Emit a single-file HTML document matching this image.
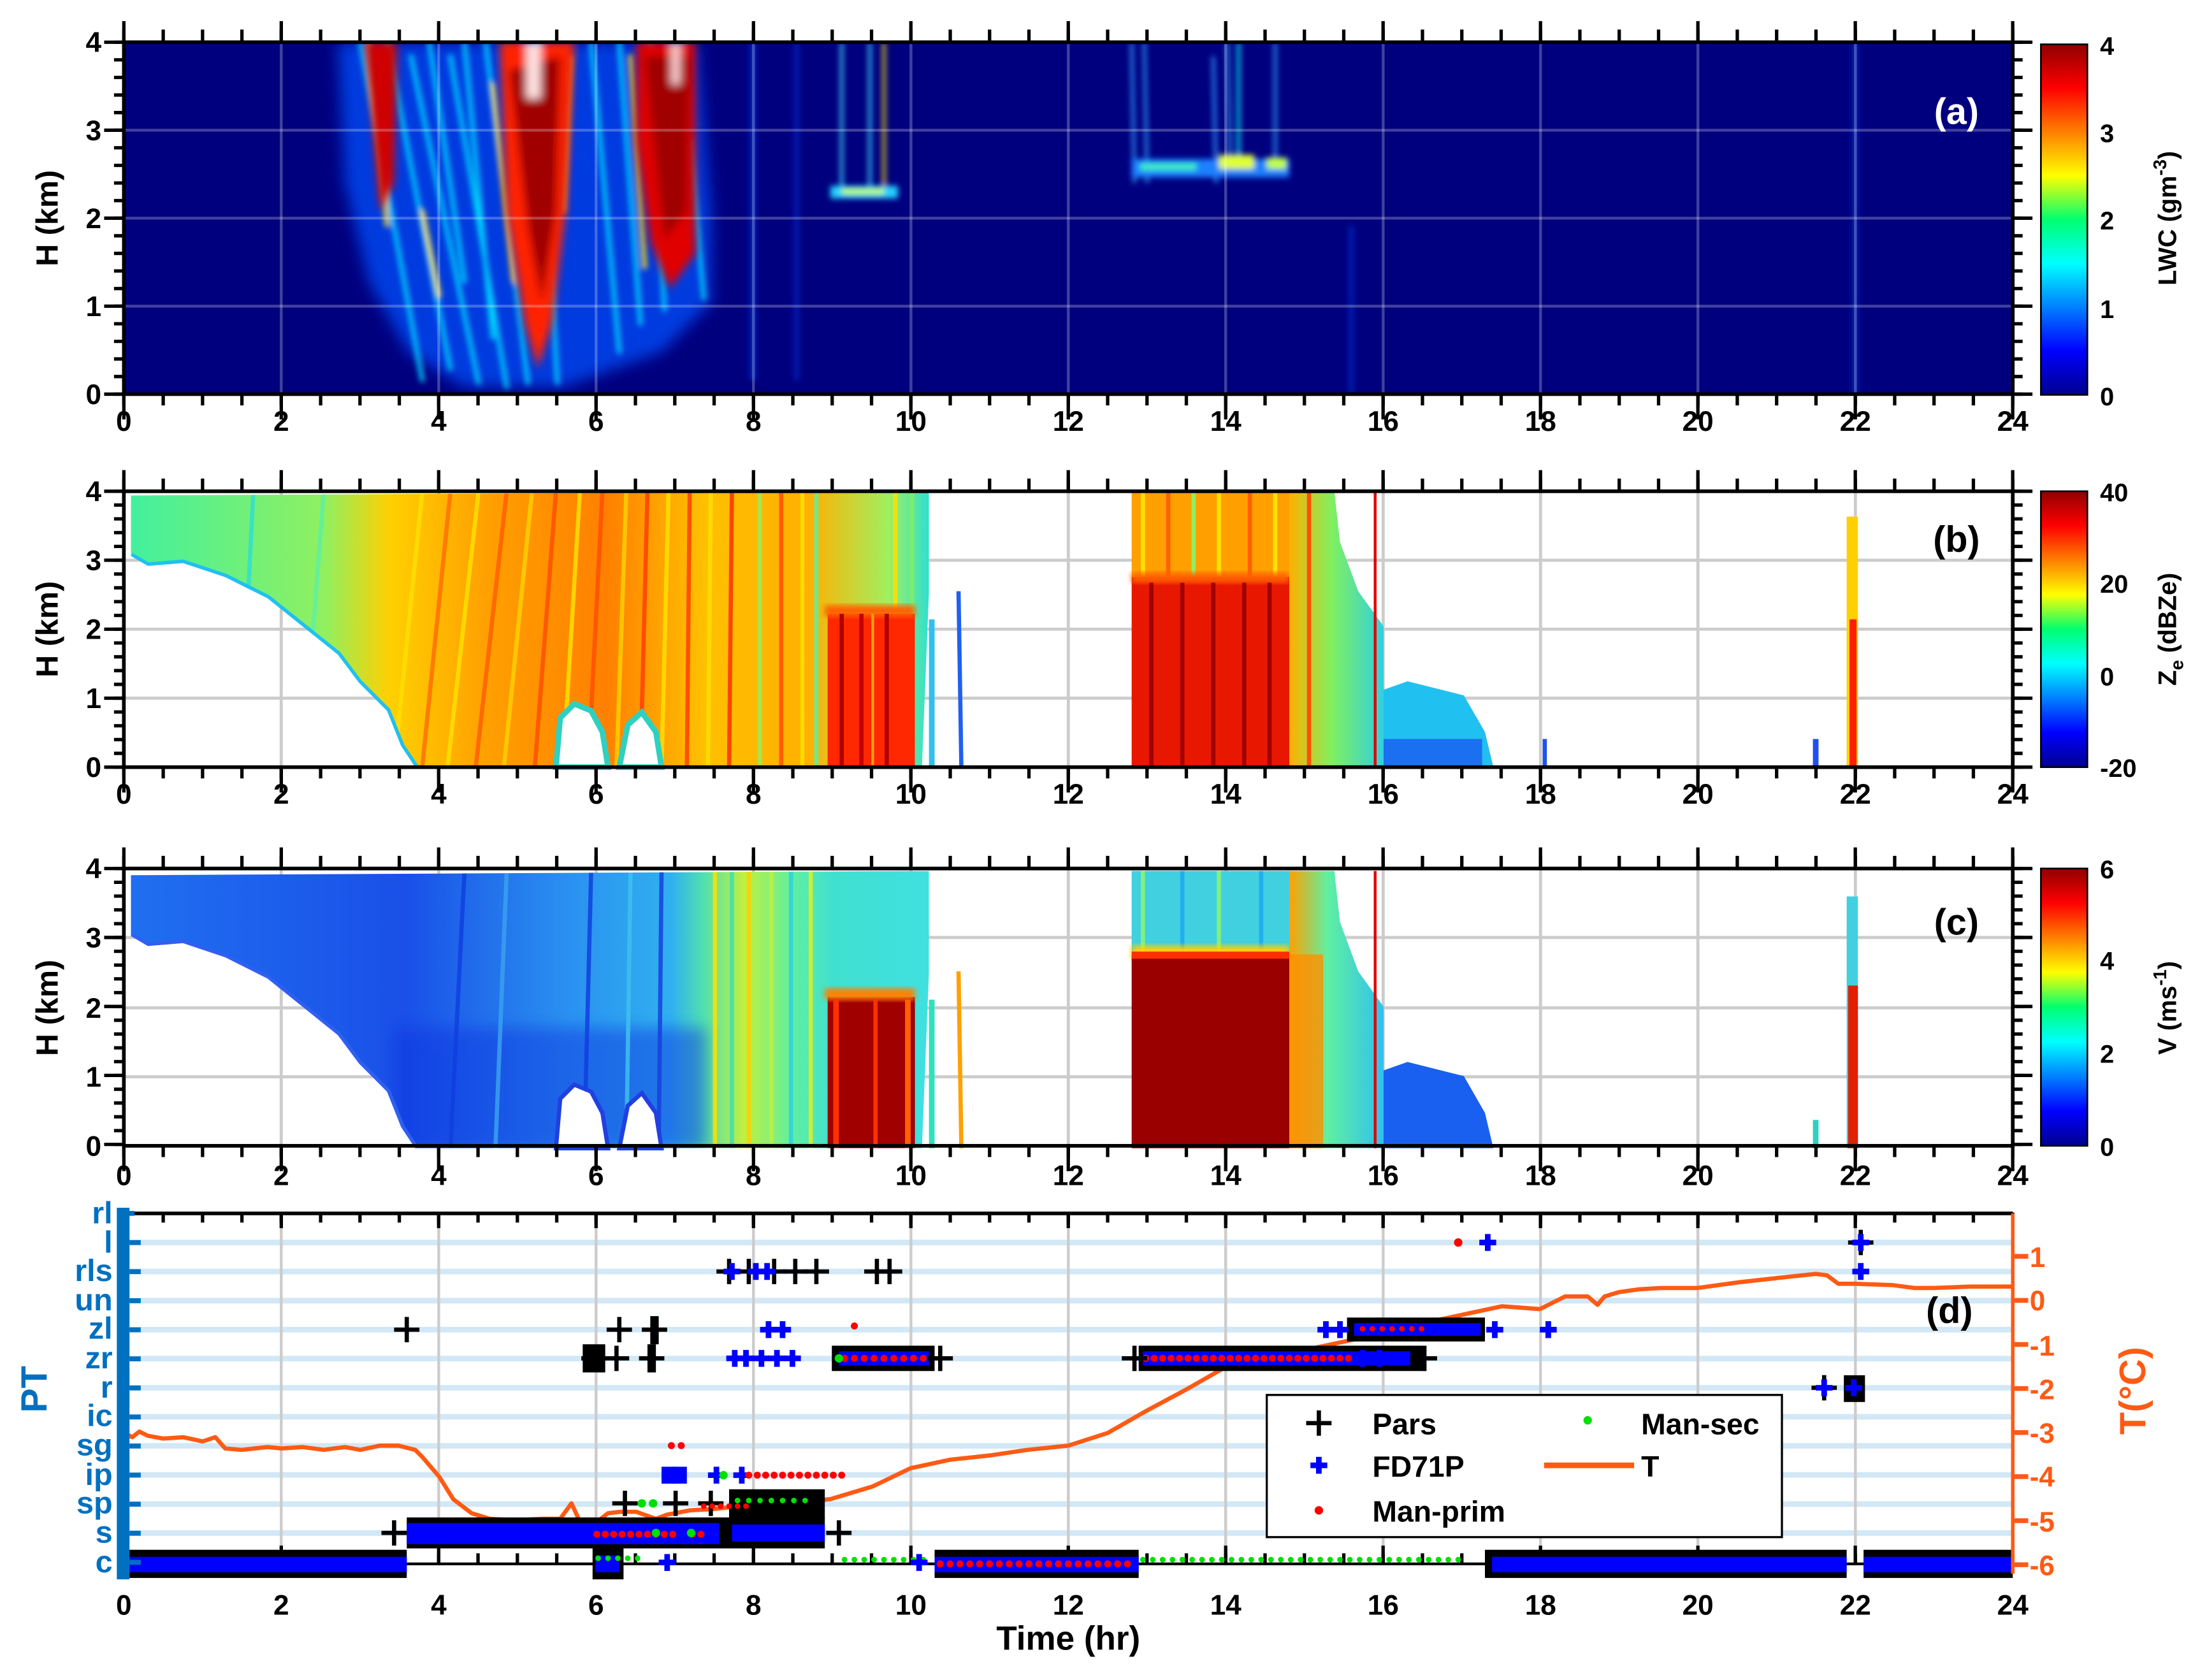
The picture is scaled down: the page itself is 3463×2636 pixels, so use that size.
<!DOCTYPE html>
<html><head><meta charset="utf-8"><style>
html,body{margin:0;padding:0;background:#fff;}
svg{display:block;}
text{font-family:"Liberation Sans Narrow","Liberation Sans",sans-serif;font-weight:bold;}
.tl{font-size:20px;text-anchor:middle;}
.yl{font-size:20px;text-anchor:end;}
.cb{font-family:"Liberation Sans",sans-serif;font-size:18px;}
.pt{font-size:22px;text-anchor:end;fill:#0070c0;}
.ot{font-size:20px;fill:#ff5a14;}
</style></head><body>
<svg width="3463" height="2636" viewBox="0 0 1568 1193.5" preserveAspectRatio="none" xmlns="http://www.w3.org/2000/svg">
<defs>
<linearGradient id="jet" x1="0" y1="1" x2="0" y2="0">
<stop offset="0" stop-color="#00008f"/><stop offset="0.125" stop-color="#0000ff"/><stop offset="0.375" stop-color="#00ffff"/><stop offset="0.5" stop-color="#00ff70"/><stop offset="0.625" stop-color="#ffff00"/><stop offset="0.875" stop-color="#ff0000"/><stop offset="1" stop-color="#900000"/>
</linearGradient>
<filter id="bl" x="-20%" y="-20%" width="140%" height="140%"><feGaussianBlur stdDeviation="2"/></filter>
<filter id="bl3" x="-20%" y="-20%" width="140%" height="140%"><feGaussianBlur stdDeviation="3"/></filter>
<filter id="bl4" x="-20%" y="-20%" width="140%" height="140%"><feGaussianBlur stdDeviation="5"/></filter>
<linearGradient id="gb" gradientUnits="userSpaceOnUse" x1="88" y1="0" x2="660" y2="0">
<stop offset="0" stop-color="#40f0a0"/><stop offset="0.25" stop-color="#90f060"/><stop offset="0.33" stop-color="#ffd000"/><stop offset="0.45" stop-color="#ffa000"/><stop offset="0.6" stop-color="#ff8000"/><stop offset="0.72" stop-color="#ffc000"/><stop offset="0.85" stop-color="#ffb000"/><stop offset="0.95" stop-color="#a0f060"/><stop offset="1" stop-color="#30e0d0"/>
</linearGradient>
<linearGradient id="gc" gradientUnits="userSpaceOnUse" x1="88" y1="0" x2="660" y2="0">
<stop offset="0" stop-color="#2070f0"/><stop offset="0.35" stop-color="#1a50e8"/><stop offset="0.55" stop-color="#2a90f0"/><stop offset="0.68" stop-color="#30b0f0"/><stop offset="0.72" stop-color="#50e0b0"/><stop offset="0.77" stop-color="#c0f040"/><stop offset="0.83" stop-color="#60f0a0"/><stop offset="0.88" stop-color="#40e0d0"/><stop offset="1" stop-color="#40e0e0"/>
</linearGradient>
<linearGradient id="g15" x1="0" y1="0" x2="1" y2="0"><stop offset="0" stop-color="#ffb000"/><stop offset="0.45" stop-color="#80f060"/><stop offset="1" stop-color="#30d0e0"/></linearGradient>
<linearGradient id="g15c" x1="0" y1="0" x2="1" y2="0"><stop offset="0" stop-color="#ffa000"/><stop offset="0.4" stop-color="#60f0a0"/><stop offset="1" stop-color="#30c0f0"/></linearGradient>
<clipPath id="cpb"><polygon points="93,352 660,349 660,420 655,545 295,545 285,530 275,505 255,485 240,465 215,445 190,425 160,410 130,400 105,402 93,395"/></clipPath>
<clipPath id="cpa"><rect x="88" y="30" width="1342" height="250"/></clipPath>
<path id="pk" d="M-9 0H9M0 -9V9" stroke="#000" stroke-width="3" fill="none"/>
<path id="pb" d="M-6 0H6M0 -6V6" stroke="#0000ff" stroke-width="4" fill="none"/>
</defs>

<!-- ================= PANEL A ================= -->
<rect x="88" y="30" width="1342" height="250" fill="#00007f"/>
<g clip-path="url(#cpa)">
<g filter="url(#bl4)">
<polygon points="240,30 495,30 505,150 505,215 470,250 400,275 330,275 290,250 262,200 245,130" fill="#0050ff" opacity="0.75"/>
</g>
<g filter="url(#bl)" stroke-linecap="round">
<g stroke="#00d8ff" stroke-width="3" fill="none">
<line x1="256" y1="30" x2="300" y2="270"/><line x1="275" y1="30" x2="320" y2="262"/><line x1="292" y1="40" x2="340" y2="272"/>
<line x1="320" y1="40" x2="360" y2="275"/><line x1="345" y1="30" x2="375" y2="272"/><line x1="382" y1="30" x2="396" y2="272"/>
<line x1="420" y1="30" x2="440" y2="250"/><line x1="440" y1="30" x2="455" y2="230"/><line x1="462" y1="30" x2="472" y2="220"/><line x1="490" y1="100" x2="500" y2="212"/>
<line x1="305" y1="30" x2="330" y2="200"/><line x1="330" y1="30" x2="350" y2="240"/>
</g>
<g stroke="#ffe000" stroke-width="3" fill="none">
<line x1="262" y1="30" x2="275" y2="160"/><line x1="350" y1="60" x2="365" y2="200"/><line x1="405" y1="40" x2="400" y2="150"/><line x1="448" y1="40" x2="458" y2="190"/><line x1="300" y1="150" x2="312" y2="210"/>
</g>
</g>
<g filter="url(#bl3)">
<polygon points="355,30 408,30 402,150 392,230 382,262 373,230 360,150" fill="#ff2000"/>
<polygon points="362,50 398,40 395,150 385,215 375,160" fill="#a00000"/>
<rect x="374" y="30" width="10" height="40" fill="#ffe0e0"/>
<polygon points="452,30 494,30 494,180 476,205 462,172 452,100" fill="#e00000"/>
<polygon points="458,40 490,40 488,150 472,170" fill="#a00000"/>
<rect x="477" y="30" width="6" height="30" fill="#ffd0d0"/>
<polygon points="260,30 282,30 280,130 270,150" fill="#d00000"/>
</g>
<g filter="url(#bl)">
<line x1="598" y1="30" x2="598" y2="140" stroke="#40e0ff" stroke-width="2"/>
<line x1="618" y1="30" x2="618" y2="140" stroke="#40e0ff" stroke-width="2"/>
<line x1="628" y1="30" x2="628" y2="140" stroke="#ffe000" stroke-width="2"/>
<rect x="590" y="132" width="48" height="9" fill="#20d0ff"/>
<rect x="598" y="134" width="30" height="4" fill="#c0ff40"/>
<g stroke="#30a0ff" stroke-width="2">
<line x1="804" y1="30" x2="806" y2="130"/><line x1="813" y1="30" x2="815" y2="130"/><line x1="862" y1="40" x2="864" y2="130"/><line x1="872" y1="30" x2="874" y2="125"/><line x1="906" y1="30" x2="906" y2="125"/>
<line x1="880" y1="30" x2="880" y2="110" stroke="#00ffff"/>
</g>
<rect x="804" y="113" width="112" height="13" fill="#1a80ff"/>
<rect x="810" y="116" width="40" height="5" fill="#40f0c0"/>
<rect x="866" y="110" width="25" height="10" fill="#e0ff30"/>
<rect x="900" y="112" width="14" height="8" fill="#c0ff40"/>
<line x1="535" y1="30" x2="535" y2="270" stroke="#0030d0" stroke-width="3"/>
<line x1="566" y1="30" x2="566" y2="270" stroke="#0030d0" stroke-width="2"/>
<line x1="1318" y1="30" x2="1318" y2="280" stroke="#0040e0" stroke-width="2"/>
<line x1="960" y1="160" x2="960" y2="280" stroke="#0030d0" stroke-width="2"/>
</g>
</g>
<g stroke="#ffffff" stroke-opacity="0.25" stroke-width="2">
<line x1="88" y1="92.5" x2="1430" y2="92.5"/><line x1="88" y1="155" x2="1430" y2="155"/><line x1="88" y1="217.5" x2="1430" y2="217.5"/>
<line x1="199.8" y1="30" x2="199.8" y2="280"/><line x1="311.7" y1="30" x2="311.7" y2="280"/><line x1="423.5" y1="30" x2="423.5" y2="280"/><line x1="535.3" y1="30" x2="535.3" y2="280"/><line x1="647.2" y1="30" x2="647.2" y2="280"/><line x1="759" y1="30" x2="759" y2="280"/><line x1="870.8" y1="30" x2="870.8" y2="280"/><line x1="982.7" y1="30" x2="982.7" y2="280"/><line x1="1094.5" y1="30" x2="1094.5" y2="280"/><line x1="1206.3" y1="30" x2="1206.3" y2="280"/><line x1="1318.2" y1="30" x2="1318.2" y2="280"/>
</g>
<text x="1390" y="88" class="cb" style="font-size:26px;fill:#fff;text-anchor:middle">(a)</text>

<!-- ================= PANEL B ================= -->
<g stroke="#cccccc" stroke-width="2.2">
<line x1="88" y1="398" x2="1430" y2="398"/><line x1="88" y1="447" x2="1430" y2="447"/><line x1="88" y1="496" x2="1430" y2="496"/>
<line x1="199.8" y1="349" x2="199.8" y2="545"/><line x1="311.7" y1="349" x2="311.7" y2="545"/><line x1="423.5" y1="349" x2="423.5" y2="545"/><line x1="535.3" y1="349" x2="535.3" y2="545"/><line x1="647.2" y1="349" x2="647.2" y2="545"/><line x1="759" y1="349" x2="759" y2="545"/><line x1="870.8" y1="349" x2="870.8" y2="545"/><line x1="982.7" y1="349" x2="982.7" y2="545"/><line x1="1094.5" y1="349" x2="1094.5" y2="545"/><line x1="1206.3" y1="349" x2="1206.3" y2="545"/><line x1="1318.2" y1="349" x2="1318.2" y2="545"/>
</g>
<g clip-path="url(#cpb)">
<rect x="88" y="349" width="580" height="196" fill="url(#gb)"/>
<g stroke-width="3" opacity="0.85">
<line x1="300" y1="349" x2="280" y2="545" stroke="#ffe000"/><line x1="320" y1="349" x2="300" y2="545" stroke="#ff7000"/><line x1="340" y1="349" x2="318" y2="545" stroke="#ffe000"/><line x1="360" y1="349" x2="338" y2="545" stroke="#ff6000"/><line x1="378" y1="349" x2="358" y2="545" stroke="#ffd000"/><line x1="395" y1="349" x2="380" y2="545" stroke="#ff5000"/><line x1="412" y1="349" x2="400" y2="545" stroke="#ffe000"/><line x1="428" y1="349" x2="418" y2="545" stroke="#ff5000"/><line x1="445" y1="349" x2="438" y2="545" stroke="#ffd000"/><line x1="460" y1="349" x2="455" y2="545" stroke="#ff4000"/><line x1="475" y1="349" x2="470" y2="545" stroke="#ffe000"/><line x1="490" y1="349" x2="488" y2="545" stroke="#ff4000"/><line x1="505" y1="349" x2="503" y2="545" stroke="#ffe000"/><line x1="520" y1="349" x2="518" y2="545" stroke="#ff3000"/><line x1="540" y1="349" x2="540" y2="545" stroke="#90f060"/><line x1="555" y1="349" x2="555" y2="545" stroke="#ff5000"/><line x1="570" y1="349" x2="570" y2="545" stroke="#ffe000"/><line x1="580" y1="349" x2="580" y2="545" stroke="#60f0a0"/><line x1="636" y1="349" x2="636" y2="545" stroke="#ffe000"/><line x1="648" y1="349" x2="648" y2="545" stroke="#80f060"/>
<line x1="230" y1="349" x2="215" y2="545" stroke="#60f0a0"/><line x1="180" y1="349" x2="170" y2="545" stroke="#30e0d0"/>
</g>
<rect x="588" y="436" width="62" height="109" fill="#ff2800"/>
<rect x="586" y="430" width="64" height="8" fill="#ff6000" filter="url(#bl)"/>
<line x1="598" y1="436" x2="598" y2="545" stroke="#b00000" stroke-width="3"/><line x1="612" y1="436" x2="612" y2="545" stroke="#c00000" stroke-width="3"/><line x1="630" y1="436" x2="630" y2="545" stroke="#b00000" stroke-width="3"/><line x1="620" y1="436" x2="620" y2="545" stroke="#ffa000" stroke-width="2"/>
<polyline points="93,395 105,402 130,400 160,410 190,425 215,445 240,465 255,485 275,505 285,530 295,545" fill="none" stroke="#20c0f0" stroke-width="5"/>
</g>
<path d="M395,545 L398,510 408,500 420,505 428,520 432,545 Z M440,545 L446,515 456,506 466,520 470,545 Z" fill="#fff" stroke="#30d0c0" stroke-width="4"/>
<rect x="660" y="440" width="4" height="105" fill="#30c0f0"/>
<line x1="681" y1="420" x2="683" y2="545" stroke="#2060f0" stroke-width="3"/>
<rect x="804" y="349" width="112" height="64" fill="#ffa000"/>
<g stroke-width="3"><line x1="812" y1="349" x2="812" y2="413" stroke="#ffe000"/><line x1="830" y1="349" x2="830" y2="413" stroke="#ff6000"/><line x1="848" y1="349" x2="848" y2="413" stroke="#90f060"/><line x1="866" y1="349" x2="866" y2="413" stroke="#ffe000"/><line x1="888" y1="349" x2="888" y2="413" stroke="#ff6000"/><line x1="906" y1="349" x2="906" y2="413" stroke="#ffe000"/></g>
<rect x="804" y="410" width="112" height="135" fill="#e81800"/>
<rect x="804" y="407" width="112" height="7" fill="#ff6000" filter="url(#bl)"/>
<g stroke="#a00000" stroke-width="3"><line x1="818" y1="414" x2="818" y2="545"/><line x1="840" y1="414" x2="840" y2="545"/><line x1="862" y1="414" x2="862" y2="545"/><line x1="884" y1="414" x2="884" y2="545"/><line x1="902" y1="414" x2="902" y2="545"/></g>
<polygon points="916,349 948,349 952,385 965,420 983,445 983,545 916,545" fill="url(#g15)"/>
<line x1="930" y1="349" x2="930" y2="545" stroke="#ff5000" stroke-width="3"/>
<line x1="977" y1="349" x2="977" y2="545" stroke="#e00000" stroke-width="2"/>
<polygon points="983,490 1000,484 1020,489 1040,494 1055,520 1061,545 983,545" fill="#20c0f0"/>
<rect x="983" y="525" width="70" height="20" fill="#1a70f0"/>
<rect x="1312" y="367" width="8" height="178" fill="#ffd000"/>
<rect x="1314" y="440" width="5" height="105" fill="#ff2000"/>
<rect x="1288" y="525" width="4" height="20" fill="#2050f0"/>
<rect x="1096" y="525" width="3" height="20" fill="#2050f0"/>
<text x="1390" y="392" class="cb" style="font-size:26px;text-anchor:middle">(b)</text>

<!-- ================= PANEL C ================= -->
<g stroke="#cccccc" stroke-width="2.2">
<line x1="88" y1="666" x2="1430" y2="666"/><line x1="88" y1="716" x2="1430" y2="716"/><line x1="88" y1="765" x2="1430" y2="765"/>
<line x1="199.8" y1="617" x2="199.8" y2="814"/><line x1="311.7" y1="617" x2="311.7" y2="814"/><line x1="423.5" y1="617" x2="423.5" y2="814"/><line x1="535.3" y1="617" x2="535.3" y2="814"/><line x1="647.2" y1="617" x2="647.2" y2="814"/><line x1="759" y1="617" x2="759" y2="814"/><line x1="870.8" y1="617" x2="870.8" y2="814"/><line x1="982.7" y1="617" x2="982.7" y2="814"/><line x1="1094.5" y1="617" x2="1094.5" y2="814"/><line x1="1206.3" y1="617" x2="1206.3" y2="814"/><line x1="1318.2" y1="617" x2="1318.2" y2="814"/>
</g>
<g transform="translate(0,268) scale(1,1.005)">
<g clip-path="url(#cpb)">
<rect x="88" y="349" width="580" height="196" fill="url(#gc)"/>
<rect x="280" y="460" width="222" height="85" fill="#0a30e0" opacity="0.45" filter="url(#bl4)"/>
<g stroke-width="3" opacity="0.85">
<line x1="330" y1="349" x2="320" y2="545" stroke="#1040e0"/><line x1="360" y1="349" x2="352" y2="545" stroke="#3aa0f0"/><line x1="420" y1="349" x2="415" y2="545" stroke="#1040e0"/><line x1="448" y1="349" x2="445" y2="545" stroke="#40c0f0"/><line x1="470" y1="349" x2="468" y2="545" stroke="#1840e0"/>
<line x1="508" y1="349" x2="508" y2="545" stroke="#ffe000"/><line x1="520" y1="349" x2="520" y2="545" stroke="#40e0b0"/><line x1="532" y1="349" x2="532" y2="545" stroke="#ffd000"/><line x1="548" y1="349" x2="548" y2="545" stroke="#c0f040"/><line x1="562" y1="349" x2="562" y2="545" stroke="#30d0e0"/><line x1="576" y1="349" x2="576" y2="545" stroke="#e0f020"/>
</g>
<rect x="588" y="438" width="62" height="107" fill="#a00000"/>
<rect x="586" y="432" width="64" height="8" fill="#ff8000" filter="url(#bl)"/>
<line x1="594" y1="440" x2="594" y2="545" stroke="#ff3000" stroke-width="4"/><line x1="622" y1="440" x2="622" y2="545" stroke="#ff3000" stroke-width="3"/><line x1="645" y1="440" x2="645" y2="545" stroke="#ff6000" stroke-width="4"/>
<polyline points="93,395 105,402 130,400 160,410 190,425 215,445 240,465 255,485 275,505 285,530 295,545" fill="none" stroke="#3060f0" stroke-width="5"/>
</g>
<path d="M395,545 L398,510 408,500 420,505 428,520 432,545 Z M440,545 L446,515 456,506 466,520 470,545 Z" fill="#fff" stroke="#2040e0" stroke-width="3"/>
<rect x="660" y="440" width="4" height="105" fill="#30e0c0"/>
<line x1="681" y1="420" x2="683" y2="545" stroke="#ffa000" stroke-width="3"/>
<rect x="804" y="349" width="112" height="62" fill="#40d0e0"/>
<g stroke-width="3"><line x1="812" y1="349" x2="812" y2="410" stroke="#80f080"/><line x1="840" y1="349" x2="840" y2="410" stroke="#20b0f0"/><line x1="866" y1="349" x2="866" y2="410" stroke="#80f080"/><line x1="896" y1="349" x2="896" y2="410" stroke="#20b0f0"/></g>
<rect x="804" y="402" width="112" height="10" fill="#ffd000" filter="url(#bl)"/>
<rect x="804" y="408" width="112" height="137" fill="#9a0000"/>
<rect x="804" y="406" width="112" height="5" fill="#ff3000"/>
<polygon points="916,349 948,349 952,385 965,420 983,445 983,545 916,545" fill="url(#g15c)"/>
<rect x="916" y="408" width="24" height="137" fill="#ff9000" opacity="0.8"/>
<line x1="977" y1="349" x2="977" y2="545" stroke="#e00000" stroke-width="2"/>
<polygon points="983,490 1000,484 1020,489 1040,494 1055,520 1061,545 983,545" fill="#1a60f0"/>
<rect x="1312" y="367" width="8" height="178" fill="#40d0e0"/>
<rect x="1313" y="430" width="7" height="115" fill="#e02000"/>
<rect x="1288" y="525" width="4" height="20" fill="#30d0c0"/>
</g>
<text x="1390" y="664" class="cb" style="font-size:26px;text-anchor:middle">(c)</text>

<!-- ============ AXES & TICKS PANELS A-C ============ -->
<g fill="none" stroke="#000">
<rect x="88" y="30" width="1342" height="250" stroke-width="2.6"/>
<rect x="88" y="349" width="1342" height="196" stroke-width="2.6"/>
<rect x="88" y="617" width="1342" height="197" stroke-width="2.6"/>
<g stroke-width="8" stroke-dasharray="2.4 25.558"><line x1="86.8" x2="1432" y1="284" y2="284"/><line x1="86.8" x2="1432" y1="549" y2="549"/><line x1="86.8" x2="1432" y1="818" y2="818"/></g>
<g stroke-width="18" stroke-dasharray="2.4 109.43"><line x1="86.8" x2="1432" y1="289" y2="289"/><line x1="86.8" x2="1432" y1="554" y2="554"/><line x1="86.8" x2="1432" y1="823" y2="823"/></g>
<g stroke-width="9" stroke-dasharray="2.4 25.558"><line x1="86.8" x2="1432" y1="25.5" y2="25.5"/><line x1="86.8" x2="1432" y1="344.5" y2="344.5"/><line x1="86.8" x2="1432" y1="612.5" y2="612.5"/></g>
<g stroke-width="15" stroke-dasharray="2.4 109.43"><line x1="86.8" x2="1432" y1="22.5" y2="22.5"/><line x1="86.8" x2="1432" y1="341.5" y2="341.5"/><line x1="86.8" x2="1432" y1="609.5" y2="609.5"/></g>
<g stroke-width="7" stroke-dasharray="2.4 10.1"><line x1="84.5" x2="84.5" y1="28.8" y2="282"/><line x1="1433.5" x2="1433.5" y1="28.8" y2="282"/></g>
<g stroke-width="14" stroke-dasharray="2.4 60.1"><line x1="81" x2="81" y1="28.8" y2="282"/><line x1="1437" x2="1437" y1="28.8" y2="282"/></g>
<g stroke-width="7" stroke-dasharray="2.4 7.4"><line x1="84.5" x2="84.5" y1="347.8" y2="547"/><line x1="1433.5" x2="1433.5" y1="347.8" y2="547"/><line x1="84.5" x2="84.5" y1="615.8" y2="816"/><line x1="1433.5" x2="1433.5" y1="615.8" y2="816"/></g>
<g stroke-width="14" stroke-dasharray="2.4 46.6"><line x1="81" x2="81" y1="347.8" y2="547"/><line x1="1437" x2="1437" y1="347.8" y2="547"/><line x1="81" x2="81" y1="615.8" y2="816"/><line x1="1437" x2="1437" y1="615.8" y2="816"/></g>
</g>
<g>
<text class="tl" x="88" y="306">0</text><text class="tl" x="199.8" y="306">2</text><text class="tl" x="311.7" y="306">4</text><text class="tl" x="423.5" y="306">6</text><text class="tl" x="535.3" y="306">8</text><text class="tl" x="647.2" y="306">10</text><text class="tl" x="759" y="306">12</text><text class="tl" x="870.8" y="306">14</text><text class="tl" x="982.7" y="306">16</text><text class="tl" x="1094.5" y="306">18</text><text class="tl" x="1206.3" y="306">20</text><text class="tl" x="1318.2" y="306">22</text><text class="tl" x="1430" y="306">24</text>
<text class="tl" x="88" y="571">0</text><text class="tl" x="199.8" y="571">2</text><text class="tl" x="311.7" y="571">4</text><text class="tl" x="423.5" y="571">6</text><text class="tl" x="535.3" y="571">8</text><text class="tl" x="647.2" y="571">10</text><text class="tl" x="759" y="571">12</text><text class="tl" x="870.8" y="571">14</text><text class="tl" x="982.7" y="571">16</text><text class="tl" x="1094.5" y="571">18</text><text class="tl" x="1206.3" y="571">20</text><text class="tl" x="1318.2" y="571">22</text><text class="tl" x="1430" y="571">24</text>
<text class="tl" x="88" y="842">0</text><text class="tl" x="199.8" y="842">2</text><text class="tl" x="311.7" y="842">4</text><text class="tl" x="423.5" y="842">6</text><text class="tl" x="535.3" y="842">8</text><text class="tl" x="647.2" y="842">10</text><text class="tl" x="759" y="842">12</text><text class="tl" x="870.8" y="842">14</text><text class="tl" x="982.7" y="842">16</text><text class="tl" x="1094.5" y="842">18</text><text class="tl" x="1206.3" y="842">20</text><text class="tl" x="1318.2" y="842">22</text><text class="tl" x="1430" y="842">24</text>
</g>
<text class="yl" x="72" y="37">4</text><text class="yl" x="72" y="99.5">3</text><text class="yl" x="72" y="162">2</text><text class="yl" x="72" y="224.5">1</text><text class="yl" x="72" y="287">0</text>
<text class="yl" x="72" y="356">4</text><text class="yl" x="72" y="405">3</text><text class="yl" x="72" y="454">2</text><text class="yl" x="72" y="503">1</text><text class="yl" x="72" y="552">0</text>
<text class="yl" x="72" y="624">4</text><text class="yl" x="72" y="673">3</text><text class="yl" x="72" y="723">2</text><text class="yl" x="72" y="772">1</text><text class="yl" x="72" y="821">0</text>
<text transform="translate(41,155) rotate(-90)" style="font-size:22px;text-anchor:middle">H (km)</text>
<text transform="translate(41,447) rotate(-90)" style="font-size:22px;text-anchor:middle">H (km)</text>
<text transform="translate(41,716) rotate(-90)" style="font-size:22px;text-anchor:middle">H (km)</text>

<rect x="1450" y="31.5" width="33" height="249" fill="url(#jet)" stroke="#000" stroke-width="1.2"/>
<rect x="1450" y="349" width="33" height="196" fill="url(#jet)" stroke="#000" stroke-width="1.2"/>
<rect x="1450" y="617" width="33" height="197" fill="url(#jet)" stroke="#000" stroke-width="1.2"/>
<g>
<text class="cb" x="1492" y="39">4</text><text class="cb" x="1492" y="101">3</text><text class="cb" x="1492" y="163">2</text><text class="cb" x="1492" y="226">1</text><text class="cb" x="1492" y="288">0</text>
<text class="cb" x="1492" y="356">40</text><text class="cb" x="1492" y="421">20</text><text class="cb" x="1492" y="487">0</text><text class="cb" x="1492" y="552">-20</text>
<text class="cb" x="1492" y="624">6</text><text class="cb" x="1492" y="689">4</text><text class="cb" x="1492" y="755">2</text><text class="cb" x="1492" y="821">0</text>
</g>
<text class="cb" transform="translate(1546,155) rotate(-90)" style="font-size:18px;text-anchor:middle">LWC (gm<tspan dy="-7" style="font-size:13px">-3</tspan><tspan dy="7">)</tspan></text>
<text class="cb" transform="translate(1546,447) rotate(-90)" style="font-size:18px;text-anchor:middle">Z<tspan dy="5" style="font-size:13px">e</tspan><tspan dy="-5"> (dBZe)</tspan></text>
<text class="cb" transform="translate(1546,716) rotate(-90)" style="font-size:18px;text-anchor:middle">V (ms<tspan dy="-7" style="font-size:13px">-1</tspan><tspan dy="7">)</tspan></text>

<!-- ================= PANEL D ================= -->
<g stroke="#d2e8f6" stroke-width="4">
<line x1="92" x2="1430" y1="882.7" y2="882.7"/><line x1="92" x2="1430" y1="903.3" y2="903.3"/><line x1="92" x2="1430" y1="924" y2="924"/><line x1="92" x2="1430" y1="944.6" y2="944.6"/><line x1="92" x2="1430" y1="965.2" y2="965.2"/><line x1="92" x2="1430" y1="985.9" y2="985.9"/><line x1="92" x2="1430" y1="1006.5" y2="1006.5"/><line x1="92" x2="1430" y1="1027.2" y2="1027.2"/><line x1="92" x2="1430" y1="1047.8" y2="1047.8"/><line x1="92" x2="1430" y1="1068.5" y2="1068.5"/><line x1="92" x2="1430" y1="1089.1" y2="1089.1"/>
</g>
<g stroke="#cccccc" stroke-width="2">
<line x1="199.8" y1="862" x2="199.8" y2="1110"/><line x1="311.7" y1="862" x2="311.7" y2="1110"/><line x1="423.5" y1="862" x2="423.5" y2="1110"/><line x1="535.3" y1="862" x2="535.3" y2="1110"/><line x1="647.2" y1="862" x2="647.2" y2="1110"/><line x1="759" y1="862" x2="759" y2="1110"/><line x1="870.8" y1="862" x2="870.8" y2="1110"/><line x1="982.7" y1="862" x2="982.7" y2="1110"/><line x1="1094.5" y1="862" x2="1094.5" y2="1110"/><line x1="1206.3" y1="862" x2="1206.3" y2="1110"/><line x1="1318.2" y1="862" x2="1318.2" y2="1110"/>
</g>
<line x1="88" x2="1430" y1="862" y2="862" stroke="#000" stroke-width="2.6"/>
<g stroke="#000" fill="none">
<line x1="86.8" x2="1432" y1="865" y2="865" stroke-width="7" stroke-dasharray="2.4 25.558"/>
<line x1="86.8" x2="1432" y1="867" y2="867" stroke-width="11" stroke-dasharray="2.4 109.43"/>
<line x1="86.8" x2="1432" y1="1107" y2="1107" stroke-width="7" stroke-dasharray="2.4 25.558"/>
<line x1="86.8" x2="1432" y1="1104" y2="1104" stroke-width="12" stroke-dasharray="2.4 109.43"/>
<line x1="88" x2="1430" y1="1111" y2="1111" stroke-width="2"/>
</g>
<polyline fill="none" stroke="#ff5a14" stroke-width="3" stroke-linejoin="round" points="88,1018 94,1021 99,1017 105,1020 116,1022 130,1021 144,1024 153,1021 160,1029 172,1030 190,1028 200,1029 215,1028 230,1030 245,1028 256,1030 270,1027 283,1027 295,1030 300,1035 312,1049 322,1065 335,1075 348,1079 365,1080 385,1079 398,1079 406,1068 412,1081 423,1082 432,1075 441,1074 452,1074 466,1079 474,1076 490,1073 507,1072 535,1069 560,1068 590,1065 620,1056 647,1043 675,1037 703,1034 730,1030 759,1027 787,1018 815,1002 843,987 871,971 887,970 900,970 915,965 932,958 960,952 983,947 1000,944 1011,940 1039,934 1067,928 1094,930 1112,921 1128,921 1135,927 1140,921 1150,918 1164,916 1180,915 1206,915 1235,911 1262,908 1290,905 1298,906 1306,912 1318,912 1345,913 1360,915 1374,915 1400,914 1430,914"/>
<rect x="88" y="1101" width="201" height="20" fill="#000"/><rect x="88" y="1106" width="201" height="11" fill="#0000ff"/>
<rect x="421" y="1100" width="22" height="22" fill="#000"/><rect x="423" y="1105" width="17" height="12" fill="#0000ff"/>
<use href="#pb" x="474" y="1110"/>
<rect x="664" y="1101" width="145" height="20" fill="#000"/><rect x="664" y="1106" width="145" height="11" fill="#0000ff"/>
<line x1="668" x2="808" y1="1111" y2="1111" stroke="#ff0000" stroke-width="5" stroke-linecap="round" stroke-dasharray="0 7"/>
<line x1="600" x2="660" y1="1108" y2="1108" stroke="#00e000" stroke-width="4" stroke-linecap="round" stroke-dasharray="0 7"/>
<line x1="812" x2="1042" y1="1108" y2="1108" stroke="#00e000" stroke-width="4" stroke-linecap="round" stroke-dasharray="0 7"/>
<line x1="425" x2="455" y1="1107" y2="1107" stroke="#00e000" stroke-width="4" stroke-linecap="round" stroke-dasharray="0 7"/>
<use href="#pb" x="653" y="1110"/>
<rect x="1055" y="1101" width="257" height="20" fill="#000"/><rect x="1060" y="1106" width="252" height="11" fill="#0000ff"/>
<rect x="1324" y="1101" width="106" height="20" fill="#000"/><rect x="1324" y="1106" width="106" height="11" fill="#0000ff"/>
<rect x="289" y="1078" width="297" height="22" fill="#000"/><rect x="289" y="1082" width="222" height="15" fill="#0000ff"/>
<rect x="520" y="1083" width="66" height="12" fill="#0000ff"/>
<line x1="424" x2="484" y1="1090" y2="1090" stroke="#ff0000" stroke-width="5" stroke-linecap="round" stroke-dasharray="0 6"/>
<line x1="492" x2="504" y1="1090" y2="1090" stroke="#ff0000" stroke-width="5" stroke-linecap="round" stroke-dasharray="0 6"/>
<circle cx="466" cy="1089" r="3" fill="#00e000"/><circle cx="491" cy="1089" r="3" fill="#00e000"/>
<use href="#pk" x="280" y="1089"/><use href="#pk" x="596" y="1089"/>
<use href="#pk" x="444" y="1068"/><use href="#pk" x="480" y="1068"/><use href="#pk" x="505" y="1068"/>
<rect x="518" y="1058" width="68" height="21" fill="#000"/>
<line x1="524" x2="580" y1="1066" y2="1066" stroke="#00e000" stroke-width="4" stroke-linecap="round" stroke-dasharray="0 8"/>
<line x1="500" x2="532" y1="1070" y2="1070" stroke="#ff0000" stroke-width="4" stroke-linecap="round" stroke-dasharray="0 6"/>
<circle cx="456" cy="1068" r="3" fill="#00e000"/><circle cx="464" cy="1068" r="3" fill="#00e000"/>
<rect x="470" y="1042" width="18" height="12" fill="#0000ff"/><use href="#pb" x="479" y="1048"/>
<use href="#pb" x="509" y="1048"/><use href="#pb" x="527" y="1048"/>
<circle cx="514" cy="1048" r="3" fill="#00e000"/>
<line x1="532" x2="600" y1="1048" y2="1048" stroke="#ff0000" stroke-width="5" stroke-linecap="round" stroke-dasharray="0 6"/>
<circle cx="477" cy="1027" r="2.5" fill="#ff0000"/><circle cx="484" cy="1027" r="2.5" fill="#ff0000"/>
<rect x="414" y="955" width="16" height="20" fill="#000"/><use href="#pk" x="422" y="965"/>
<use href="#pk" x="438" y="965"/><use href="#pk" x="463" y="965"/><rect x="460" y="955" width="6" height="20" fill="#000"/>
<use href="#pb" x="522" y="965"/><use href="#pb" x="530" y="965"/><use href="#pb" x="541" y="965"/><use href="#pb" x="552" y="965"/><use href="#pb" x="563" y="965"/>
<rect x="591" y="956" width="73" height="18" fill="#000"/><rect x="596" y="960" width="64" height="10" fill="#0000ff"/>
<line x1="600" x2="660" y1="965" y2="965" stroke="#ff0000" stroke-width="5" stroke-linecap="round" stroke-dasharray="0 7"/>
<circle cx="596" cy="965" r="3" fill="#00e000"/>
<use href="#pk" x="668" y="965"/>
<rect x="809" y="956" width="202" height="18" fill="#000"/><rect x="812" y="960" width="190" height="10" fill="#0000ff"/>
<line x1="814" x2="962" y1="965" y2="965" stroke="#ff0000" stroke-width="5" stroke-linecap="round" stroke-dasharray="0 6"/>
<use href="#pk" x="806" y="965"/><use href="#pb" x="968" y="965"/><use href="#pb" x="980" y="965"/><use href="#pk" x="1012" y="965"/>
<use href="#pk" x="289" y="944.6"/><use href="#pk" x="440" y="944.6"/><use href="#pk" x="465" y="944.6"/><rect x="462" y="935" width="6" height="20" fill="#000"/>
<use href="#pb" x="546" y="944.6"/><use href="#pb" x="556" y="944.6"/>
<circle cx="607" cy="942" r="2.5" fill="#ff0000"/>
<rect x="957" y="936" width="98" height="17" fill="#000"/><rect x="962" y="940" width="90" height="9" fill="#0000ff"/>
<line x1="968" x2="1012" y1="944" y2="944" stroke="#ff0000" stroke-width="4" stroke-linecap="round" stroke-dasharray="0 7"/>
<use href="#pb" x="942" y="944.6"/><use href="#pb" x="952" y="944.6"/><use href="#pb" x="1062" y="944.6"/><use href="#pb" x="1100" y="944.6"/>
<use href="#pk" x="518" y="903.3"/><use href="#pk" x="532" y="903.3"/><use href="#pk" x="550" y="903.3"/><use href="#pk" x="565" y="903.3"/><use href="#pk" x="580" y="903.3"/><use href="#pk" x="623" y="903.3"/><use href="#pk" x="632" y="903.3"/>
<use href="#pb" x="520" y="903.3"/><use href="#pb" x="537" y="903.3"/><use href="#pb" x="545" y="903.3"/>
<circle cx="1036" cy="882.7" r="3" fill="#ff0000"/><use href="#pb" x="1057" y="882.7"/>
<use href="#pk" x="1322" y="882.7"/><use href="#pb" x="1322" y="882.7"/><use href="#pb" x="1322" y="903.3"/>
<use href="#pk" x="1296" y="985.9"/><use href="#pb" x="1296" y="985.9"/>
<rect x="1310" y="977" width="15" height="19" fill="#000"/><use href="#pb" x="1317" y="985.9"/>
<rect x="83" y="858" width="9" height="264" fill="#0070c0"/>
<line x1="92" x2="100" y1="862" y2="862" stroke="#0070c0" stroke-width="3.5" stroke-dasharray="3.5 17.15"/>
<line x1="96" x2="96" y1="881" y2="1112" stroke="#0070c0" stroke-width="8" stroke-dasharray="3.5 17.15"/>
<line x1="1430" x2="1430" y1="862" y2="1118" stroke="#ff5a14" stroke-width="2.5"/>
<line x1="1436" x2="1436" y1="890.8" y2="1114" stroke="#ff5a14" stroke-width="10" stroke-dasharray="3.4 27.9"/>
<g>
<text class="ot" x="1442" y="900">1</text><text class="ot" x="1442" y="931">0</text><text class="ot" x="1442" y="963">-1</text><text class="ot" x="1442" y="994">-2</text><text class="ot" x="1442" y="1025">-3</text><text class="ot" x="1442" y="1056">-4</text><text class="ot" x="1442" y="1088">-5</text><text class="ot" x="1442" y="1119">-6</text>
</g>
<text transform="translate(1524,988) rotate(-90)" style="font-size:26px;text-anchor:middle;fill:#ff5a14">T(°C)</text>
<text class="pt" x="80" y="869">rl</text><text class="pt" x="80" y="890">l</text><text class="pt" x="80" y="910">rls</text><text class="pt" x="80" y="931">un</text><text class="pt" x="80" y="951">zl</text><text class="pt" x="80" y="972">zr</text><text class="pt" x="80" y="993">r</text><text class="pt" x="80" y="1013">ic</text><text class="pt" x="80" y="1034">sg</text><text class="pt" x="80" y="1055">ip</text><text class="pt" x="80" y="1075">sp</text><text class="pt" x="80" y="1096">s</text><text class="pt" x="80" y="1117">c</text>
<text transform="translate(33,987) rotate(-90)" style="font-size:26px;text-anchor:middle;fill:#0070c0">PT</text>
<text x="1385" y="940" class="cb" style="font-size:26px;text-anchor:middle">(d)</text>
<rect x="900" y="991" width="366" height="101" fill="#fff" stroke="#000" stroke-width="1.5"/>
<use href="#pk" x="937" y="1011"/><text x="975" y="1019" style="font-size:21px">Pars</text>
<use href="#pb" x="937" y="1041"/><text x="975" y="1049" style="font-size:21px">FD71P</text>
<circle cx="937" cy="1073" r="3" fill="#ff0000"/><text x="975" y="1081" style="font-size:21px">Man-prim</text>
<circle cx="1128" cy="1009" r="3" fill="#00e000"/><text x="1166" y="1019" style="font-size:21px">Man-sec</text>
<line x1="1097" x2="1161" y1="1041" y2="1041" stroke="#ff5a14" stroke-width="4"/><text x="1166" y="1049" style="font-size:21px">T</text>
<g>
<text class="tl" x="88" y="1147">0</text><text class="tl" x="199.8" y="1147">2</text><text class="tl" x="311.7" y="1147">4</text><text class="tl" x="423.5" y="1147">6</text><text class="tl" x="535.3" y="1147">8</text><text class="tl" x="647.2" y="1147">10</text><text class="tl" x="759" y="1147">12</text><text class="tl" x="870.8" y="1147">14</text><text class="tl" x="982.7" y="1147">16</text><text class="tl" x="1094.5" y="1147">18</text><text class="tl" x="1206.3" y="1147">20</text><text class="tl" x="1318.2" y="1147">22</text><text class="tl" x="1430" y="1147">24</text>
</g>
<text x="759" y="1172" style="font-size:24px;text-anchor:middle">Time (hr)</text>
</svg>
</body></html>
